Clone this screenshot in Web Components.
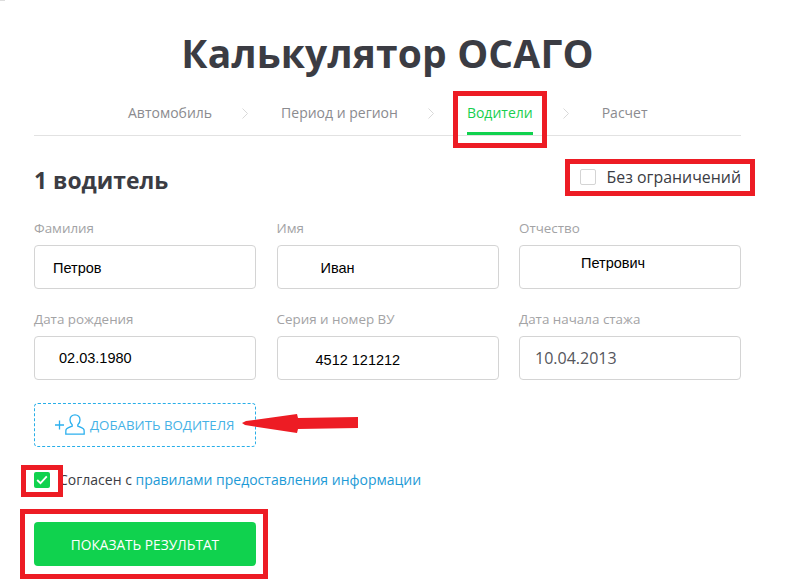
<!DOCTYPE html>
<html lang="ru">
<head>
<meta charset="utf-8">
<title>Калькулятор ОСАГО</title>
<style>
  html, body { margin: 0; background: #fff; }
  body { font-family: "Open Sans", sans-serif; color: #3b3c43; }
</style>
</head>
<body>
<osago-form>
  <osago-steps slot="steps"></osago-steps>
  <osago-field label="Фамилия" value="Петров" shift="18"></osago-field>
  <osago-field label="Имя" value="Иван" shift="43"></osago-field>
  <osago-field label="Отчество" value="Петрович" shift="61" lift="10"></osago-field>
  <osago-field label="Дата рождения" value="02.03.1980" shift="24" lift="2"></osago-field>
  <osago-field label="Серия и номер ВУ" value="4512 121212" shift="38" drop="2"></osago-field>
  <osago-field label="Дата начала стажа" value="10.04.2013" shift="15" lift="2" native></osago-field>
</osago-form>

<script>
class OsagoSteps extends HTMLElement {
  constructor() {
    super()
    this.attachShadow({ mode: 'open' })
  }
  connectedCallback() {
    const names = ['Автомобиль', 'Период и регион', 'Водители', 'Расчет']
    const chevron = `<svg width="6" height="11" viewBox="0 0 6 11"><path d="M.5.5l5 5-5 5" fill="none" stroke="#d9d9d9"/></svg>`
    this.shadowRoot.innerHTML = `
    <style>
      :host { display: flex; align-items: stretch; height: 46px; padding-left: 94px; border-bottom: 1px solid #e2e2e2; font-size: 14px; color: #8b8b8f; }
      span { display: flex; align-items: center; box-sizing: border-box; height: 46px; white-space: nowrap; }
      span.on { color: #18cf4f; border-bottom: 3px solid #10d24e; padding-top: 3px; }
      svg { align-self: center; margin: 2px 33px 0 30px; }
    </style>
    ${names.map((n, i) => `<span class="${n === 'Водители' ? 'on' : ''}">${n}</span>${i < 3 ? chevron : ''}`).join('')}
    `
  }
}
customElements.define('osago-steps', OsagoSteps)

class OsagoField extends HTMLElement {
  constructor() {
    super()
    this.attachShadow({ mode: 'open' })
  }
  connectedCallback() {
    const lift = this.getAttribute('lift') || 0
    const drop = Number(this.getAttribute('drop') || 0) + 2
    this.shadowRoot.innerHTML = `
    <style>
      :host { display: block; }
      label { display: block; height: 19px; line-height: 19px; margin-bottom: 7px; font-size: 13.4px; color: #a3a3a5; }
      div { display: flex; align-items: center; box-sizing: border-box; height: 44px; border: 1px solid #d4d4d4; border-radius: 4px;
            padding: ${drop}px 0 ${lift}px ${this.getAttribute('shift')}px; color: #000;
            font: 14.5px "Liberation Sans", Arial, sans-serif; }
      :host([native]) div { font: 16px "Open Sans", sans-serif; color: #55565c; }
    </style>
    <label>${this.getAttribute('label')}</label>
    <div>${this.getAttribute('value')}</div>
    `
  }
}
customElements.define('osago-field', OsagoField)

class RedFrame extends HTMLElement {
  constructor() {
    super()
    this.attachShadow({ mode: 'open' })
    this.shadowRoot.innerHTML = `
    <style>
      :host { position: absolute; box-sizing: border-box; border: 5px solid #ed1c24; pointer-events: none; }
    </style>
    `
  }
}
customElements.define('red-frame', RedFrame)

class OsagoForm extends HTMLElement {
  constructor() {
    super()
    this.attachShadow({ mode: 'open' })
    this.shadowRoot.innerHTML = `
    <style>
      :host { display: block; position: relative; width: 785px; height: 585px; overflow: hidden; }
      main { box-sizing: border-box; width: 741px; padding: 0 0 0 34px; }
      h1 { margin: 0; padding-top: 27px; height: 62px; line-height: 52px; text-align: center; font-size: 39px; font-weight: 700; letter-spacing: .15px; color: #3b3c43; white-space: nowrap; box-sizing: content-box; }
      .head { display: flex; justify-content: space-between; align-items: center; height: 44px; margin-top: 19px; }
      h2 { margin: 0; padding-top: 6px; font-size: 22.9px; font-weight: 700; }
      .free { display: flex; align-items: center; gap: 11px; font-size: 15.9px; }
      .box { box-sizing: border-box; width: 16px; height: 16px; border: 1px solid #d4d4d4; border-radius: 2px; }
      .grid { display: grid; grid-template-columns: 222px 222px 222px; column-gap: 20.5px; row-gap: 21px; margin-top: 20px; }
      .add { display: flex; align-items: center; box-sizing: border-box; width: 222px; height: 44px; margin-top: 23px; padding-left: 20px; border: 1px dashed #27aee8; border-radius: 4px; font-size: 13.3px; color: #45b2e6; }
      .add svg { margin-right: 5px; }
      .agree { display: flex; align-items: center; height: 16px; margin-top: 25px; font-size: 14px; white-space: pre; }
      .agree .tick { display: flex; align-items: center; justify-content: center; width: 16px; height: 16px; margin-right: 10px; background: #10d24e; border-radius: 2px; }
      .agree .text { margin: -2px 0 0 -1px; }
      a { color: #1d9ad6; text-decoration: none; }
      button { display: block; width: 222px; height: 44px; margin: 34px 0 0; border: 0; border-radius: 4px; background: #10d24e; color: #fff; font: 500 13.7px "Open Sans", sans-serif; }
      .arrow { position: absolute; left: 242px; top: 414px; }
      .corner { position: absolute; left: 0; top: 0; width: 5px; height: 1px; background: #ddd; }
    </style>
    <main>
      <h1>Калькулятор ОСАГО</h1>
      <slot name="steps"></slot>
      <div class="head">
        <h2>1 водитель</h2>
        <div class="free"><span class="box"></span>Без ограничений</div>
      </div>
      <div class="grid"><slot></slot></div>
      <div class="add">
        <svg width="30" height="22" viewBox="0 0 30 22" fill="none" stroke="#2cb0ee" stroke-width="1.3">
          <path d="M0 11h9M4.500 6.500v9"/>
          <path d="M20 .8c-3 0-5 2.300-5 5.200 0 2 .9 3.700 2.200 4.700v1.500c-2.300.8-5.700 2-6.200 3.600-.2.700-.2 4.400-.2 4.400h18.400s0-3.700-.2-4.400c-.5-1.600-3.900-2.800-6.200-3.600v-1.500c1.300-1 2.200-2.700 2.200-4.700 0-2.900-2-5.200-5-5.200z"/>
        </svg>
        ДОБАВИТЬ ВОДИТЕЛЯ
      </div>
      <div class="agree"><span class="tick"><svg width="12" height="10" viewBox="0 0 12 10"><path d="M1.200 5l3.300 3.200 6.300-6.800" fill="none" stroke="#fff" stroke-width="1.800"/></svg></span><span class="text">Согласен с <a href="#">правилами предоставления информации</a></span></div>
      <button>ПОКАЗАТЬ РЕЗУЛЬТАТ</button>
    </main>
    <span class="corner"></span>
    <red-frame style="left:453px;top:91px;width:94px;height:57px"></red-frame>
    <red-frame style="left:565px;top:159px;width:190px;height:37px"></red-frame>
    <red-frame style="left:21px;top:465px;width:42px;height:32px"></red-frame>
    <red-frame style="left:20px;top:509px;width:248px;height:70px"></red-frame>
    <svg class="arrow" width="116" height="19" viewBox="0 0 116 19"><path d="M0 9l4-2 51-7 1 4 60-1v11l-60 1-1 4-52-8-3-2z" fill="#ed1c24"/></svg>
    `
  }
}
customElements.define('osago-form', OsagoForm)
</script>
</body>
</html>
